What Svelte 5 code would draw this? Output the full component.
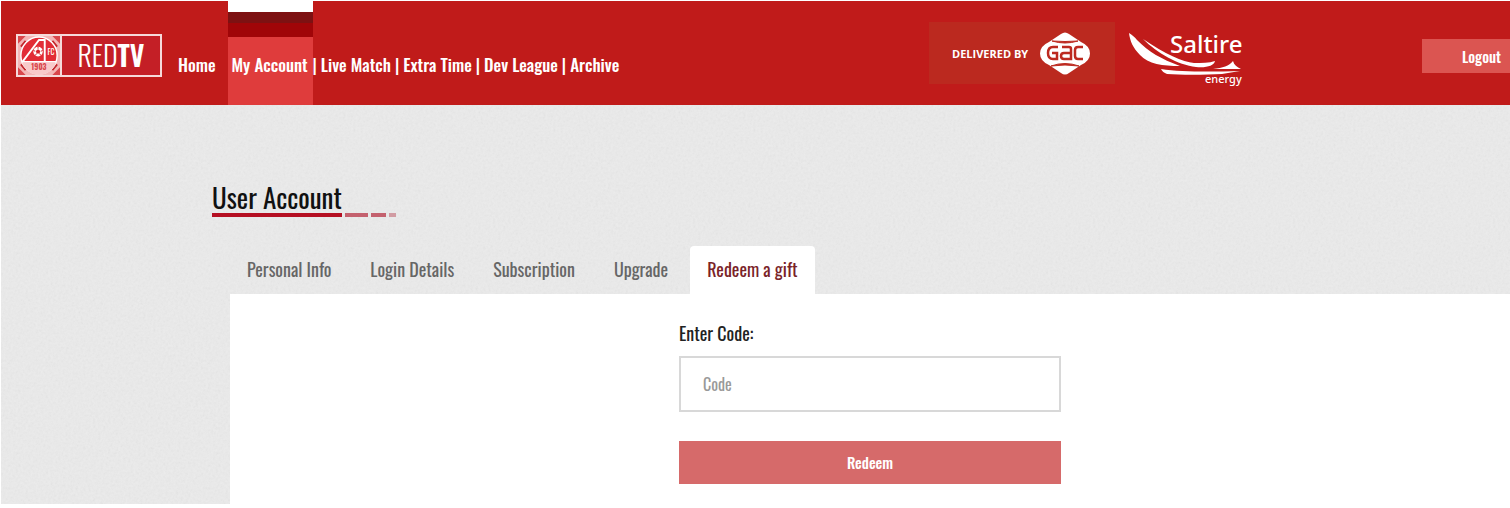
<script>
  let code = '';
  let activeTab = 'Redeem a gift';

  const navLinks = ['Live Match', 'Extra Time', 'Dev League', 'Archive'];
  const tabs = ['Personal Info', 'Login Details', 'Subscription', 'Upgrade', 'Redeem a gift'];

  function redeem() {
    code = code.trim();
  }
</script>

<div class="page">
  <header class="header">
    <a class="logo" href="#home" aria-label="RED TV">
      <svg class="crest" viewBox="0 0 44 40" preserveAspectRatio="none">
        <rect width="44" height="40" fill="#f3b6b6" />
        <path d="M0 0h8L0 8zM44 0h-8l8 8zM0 40h8l-8-8zM44 40h-8l8-8z" fill="#d9474c" />
        <path d="M3 11l5-6M36 5l5 6M3 29l5 6M36 35l5-6" stroke="#c4262b" stroke-width="2" />
        <circle cx="22" cy="20" r="19" fill="#e22c36" stroke="#fff" stroke-width="1.5" />
        <path d="M4 27h36a19 19 0 0 1-36 0z" fill="#f8caca" />
        <path d="M5 26L22 4h6v22" fill="none" stroke="#fff" stroke-width="2" />
        <path d="M4 26.500h36" stroke="#fff" stroke-width="1.500" />
        <circle cx="21" cy="16" r="5" fill="#fff" />
        <path d="M21 13.500l2.400 1.800-.9 2.700h-3l-.9-2.700z" fill="#d5232b" />
        <path d="M21 11v2M26 15l-2 .5M24 20l-1.500-2M18 20l1.500-2M16 15l2 .5" stroke="#d5232b" />
        <text x="31" y="19" font-size="8" fill="#fff">FC</text>
        <text x="14" y="35" font-size="8" font-weight="bold" fill="#d9474c">1903</text>
      </svg>
      <span class="wordmark">RED<b>TV</b></span>
    </a>
    <nav class="nav">
      <a class="home" href="#home">Home</a>
      <a class="current" href="#account">My Account</a>
      {#each navLinks as link}
        <span class="divider">|</span>
        <a href="#{link}">{link}</a>
      {/each}
    </nav>
    <div class="sponsors">
      <a class="gac" href="#gac">
        <span>DELIVERED BY</span>
        <svg width="50" height="43" viewBox="0 0 50 43">
          <path d="M21 2q4-3 8 0l12 8q9 4 9 11.500T41 33l-12 8q-4 3-8 0L9 33Q0 29 0 21.500T9 10z" fill="#fff" />
          <path d="M12 9q13 4 26 0q-13 1-26 0zM11 34q14-5 28 0q-14-2-28 0z" fill="#bd2a20" stroke="#bd2a20" />
          <path d="M18 15h-5q-5 0-5 6t5 6h4v-6h-5M22 15h7q2 0 2 2v10h-7q-3 0-3-3t3-3h7M43 15h-5q-3 0-3 3v6q0 3 3 3h5" fill="none" stroke="#bd2a20" stroke-width="2.500" />
        </svg>
      </a>
      <a href="#saltire" aria-label="Saltire energy">
        <svg class="saltire" width="114" height="54" viewBox="0 0 114 54">
          <path d="M0 0c3 2 6 4 8 7c12 12 24 19 43 26c-17 0-32-2-40-11C4 15 1 8 0 0z" fill="#fff" />
          <path d="M14 6c22 15 40 23 51 24c8 0 15 0 21-2c-1 5-9 7-19 6C49 32 28 20 14 6z" fill="#fff" />
          <path d="M32 36c20 3 48 3 79 2c-6 1-12 2-18 3c-18 1-42 1-55 0c-3-1-5-3-6-5z" fill="#fff" />
          <path d="M84 36c10-1 16-3 20-8c1 4 4 6 8 8z" fill="#fff" />
          <text x="41" y="20" font-size="24" fill="#fff">Saltire</text>
          <text x="76" y="50" font-size="11" fill="#fff">energy</text>
        </svg>
      </a>
    </div>
    <button class="logout" type="button">Logout</button>
  </header>

  <main>
    <div class="title">
      <h1>User Account</h1>
      <i class="long"></i><i class="mid"></i><i class="short"></i>
    </div>
    <div class="account">
      <div class="tabs" role="tablist">
        {#each tabs as tab}
          <button
            type="button"
            role="tab"
            class:active={activeTab === tab}
            aria-selected={activeTab === tab}
            on:click={() => (activeTab = tab)}>{tab}</button>
        {/each}
      </div>
      <div class="panel">
        <form on:submit|preventDefault={redeem}>
          <label for="code">Enter Code:</label>
          <input id="code" type="text" placeholder="Code" bind:value={code} />
          <button type="submit">Redeem</button>
        </form>
      </div>
    </div>
  </main>
</div>

<style>
  :global(body) {
    margin: 0;
    background: #fff;
  }

  .page,
  button,
  input {
    font-family: Oswald, 'Liberation Sans Narrow', 'Liberation Sans', sans-serif;
  }

  .page {
    box-sizing: border-box;
    padding: 1px 0 4px 1px;
  }

  a {
    color: inherit;
    text-decoration: none;
  }

  button {
    border: 0;
    cursor: pointer;
  }

  .header {
    display: flex;
    align-items: center;
    height: 104px;
    background: #c01b1a;
    color: #fff;
  }

  .logo {
    display: flex;
    box-sizing: border-box;
    width: 146px;
    height: 43px;
    margin: 5px 0 0 15px;
    border: 2px solid #f6dada;
    background: #c41f26;
  }

  .crest {
    width: 42px;
    height: 39px;
    border-right: 2px solid #f6dada;
  }

  .wordmark {
    flex: 1;
    text-align: center;
    font-size: 28px;
    font-weight: 300;
    line-height: 38px;
  }

  .wordmark b {
    font-weight: 600;
  }

  .nav {
    display: flex;
    align-self: stretch;
    margin-left: 12px;
    font-size: 17px;
    font-weight: 500;
    line-height: 24px;
    white-space: nowrap;
  }

  .nav a,
  .divider {
    padding-top: 52px;
  }

  .nav .home {
    padding-left: 4px;
    padding-right: 12px;
  }

  .nav .current {
    box-sizing: border-box;
    width: 85px;
    margin-top: -1px;
    padding-top: 53px;
    padding-left: 4px;
    background: linear-gradient(#fff 12px, #7d1112 12px 23px, #a00508 23px 37px, #df3c3c 37px);
  }

  .divider {
    margin: 0 4px;
  }

  .nav .current + .divider {
    margin-left: 0;
  }

  .sponsors {
    display: flex;
    align-items: center;
    gap: 14px;
    margin-left: auto;
  }

  .gac {
    display: flex;
    box-sizing: border-box;
    align-items: center;
    justify-content: space-between;
    width: 186px;
    height: 62px;
    padding: 0 25px 0 23px;
    background: #bb291f;
    font: bold 11px 'Open Sans', sans-serif;
  }

  .saltire {
    display: block;
    margin-top: 14px;
    overflow: visible;
    font-family: 'Noto Sans', sans-serif;
    font-weight: 500;
  }

  .logout {
    width: 88px;
    height: 34px;
    margin: 5px 0 0 179px;
    padding: 0 10px 0 40px;
    background: #db5551;
    color: #fff;
    font-size: 15px;
    font-weight: 500;
    text-align: left;
  }

  main {
    padding-top: 76px;
    background: #ebebeb url("data:image/svg+xml,%3Csvg xmlns='http://www.w3.org/2000/svg' width='200' height='200'%3E%3Cfilter id='n'%3E%3CfeTurbulence type='fractalNoise' baseFrequency='.4' numOctaves='3' stitchTiles='stitch'/%3E%3CfeColorMatrix type='saturate' values='0'/%3E%3C/filter%3E%3Crect width='200' height='200' filter='url(%23n)' opacity='.12'/%3E%3C/svg%3E");
  }

  .title {
    display: flex;
    align-items: flex-end;
    gap: 3px;
    margin-left: 211px;
  }

  h1 {
    margin: 0;
    border-bottom: 4px solid #b50f22;
    color: #111;
    font-size: 27px;
    font-weight: normal;
    line-height: 32px;
  }

  .title i {
    height: 4px;
    background: #c4616e;
  }

  .title .long {
    width: 23px;
  }

  .title .mid {
    width: 15px;
  }

  .title .short {
    width: 7px;
    background: #d19ba2;
  }

  .account {
    margin: 29px 0 0 229px;
  }

  .tabs {
    display: flex;
    gap: 5px;
  }

  .tabs button {
    height: 48px;
    padding: 0 17px 2px;
    border-radius: 4px 4px 0 0;
    background: none;
    color: #666;
    font-size: 18px;
  }

  .tabs .active {
    background: #fff;
    color: #7a2328;
  }

  .panel {
    padding: 26px 0 20px;
    background: #fff;
  }

  form {
    display: flex;
    flex-direction: column;
    width: 382px;
    margin: 0 auto;
  }

  label {
    margin-bottom: 10px;
    color: #222;
    font-size: 18px;
    line-height: 26px;
  }

  input {
    box-sizing: border-box;
    height: 56px;
    padding: 0 22px;
    border: 2px solid #d8d8d8;
    color: #333;
    font-size: 16px;
  }

  input::placeholder {
    color: #999;
  }

  form button {
    height: 43px;
    margin-top: 29px;
    padding-bottom: 3px;
    background: #d66a6a;
    color: #fff;
    font-size: 15px;
    font-weight: 500;
  }
</style>
